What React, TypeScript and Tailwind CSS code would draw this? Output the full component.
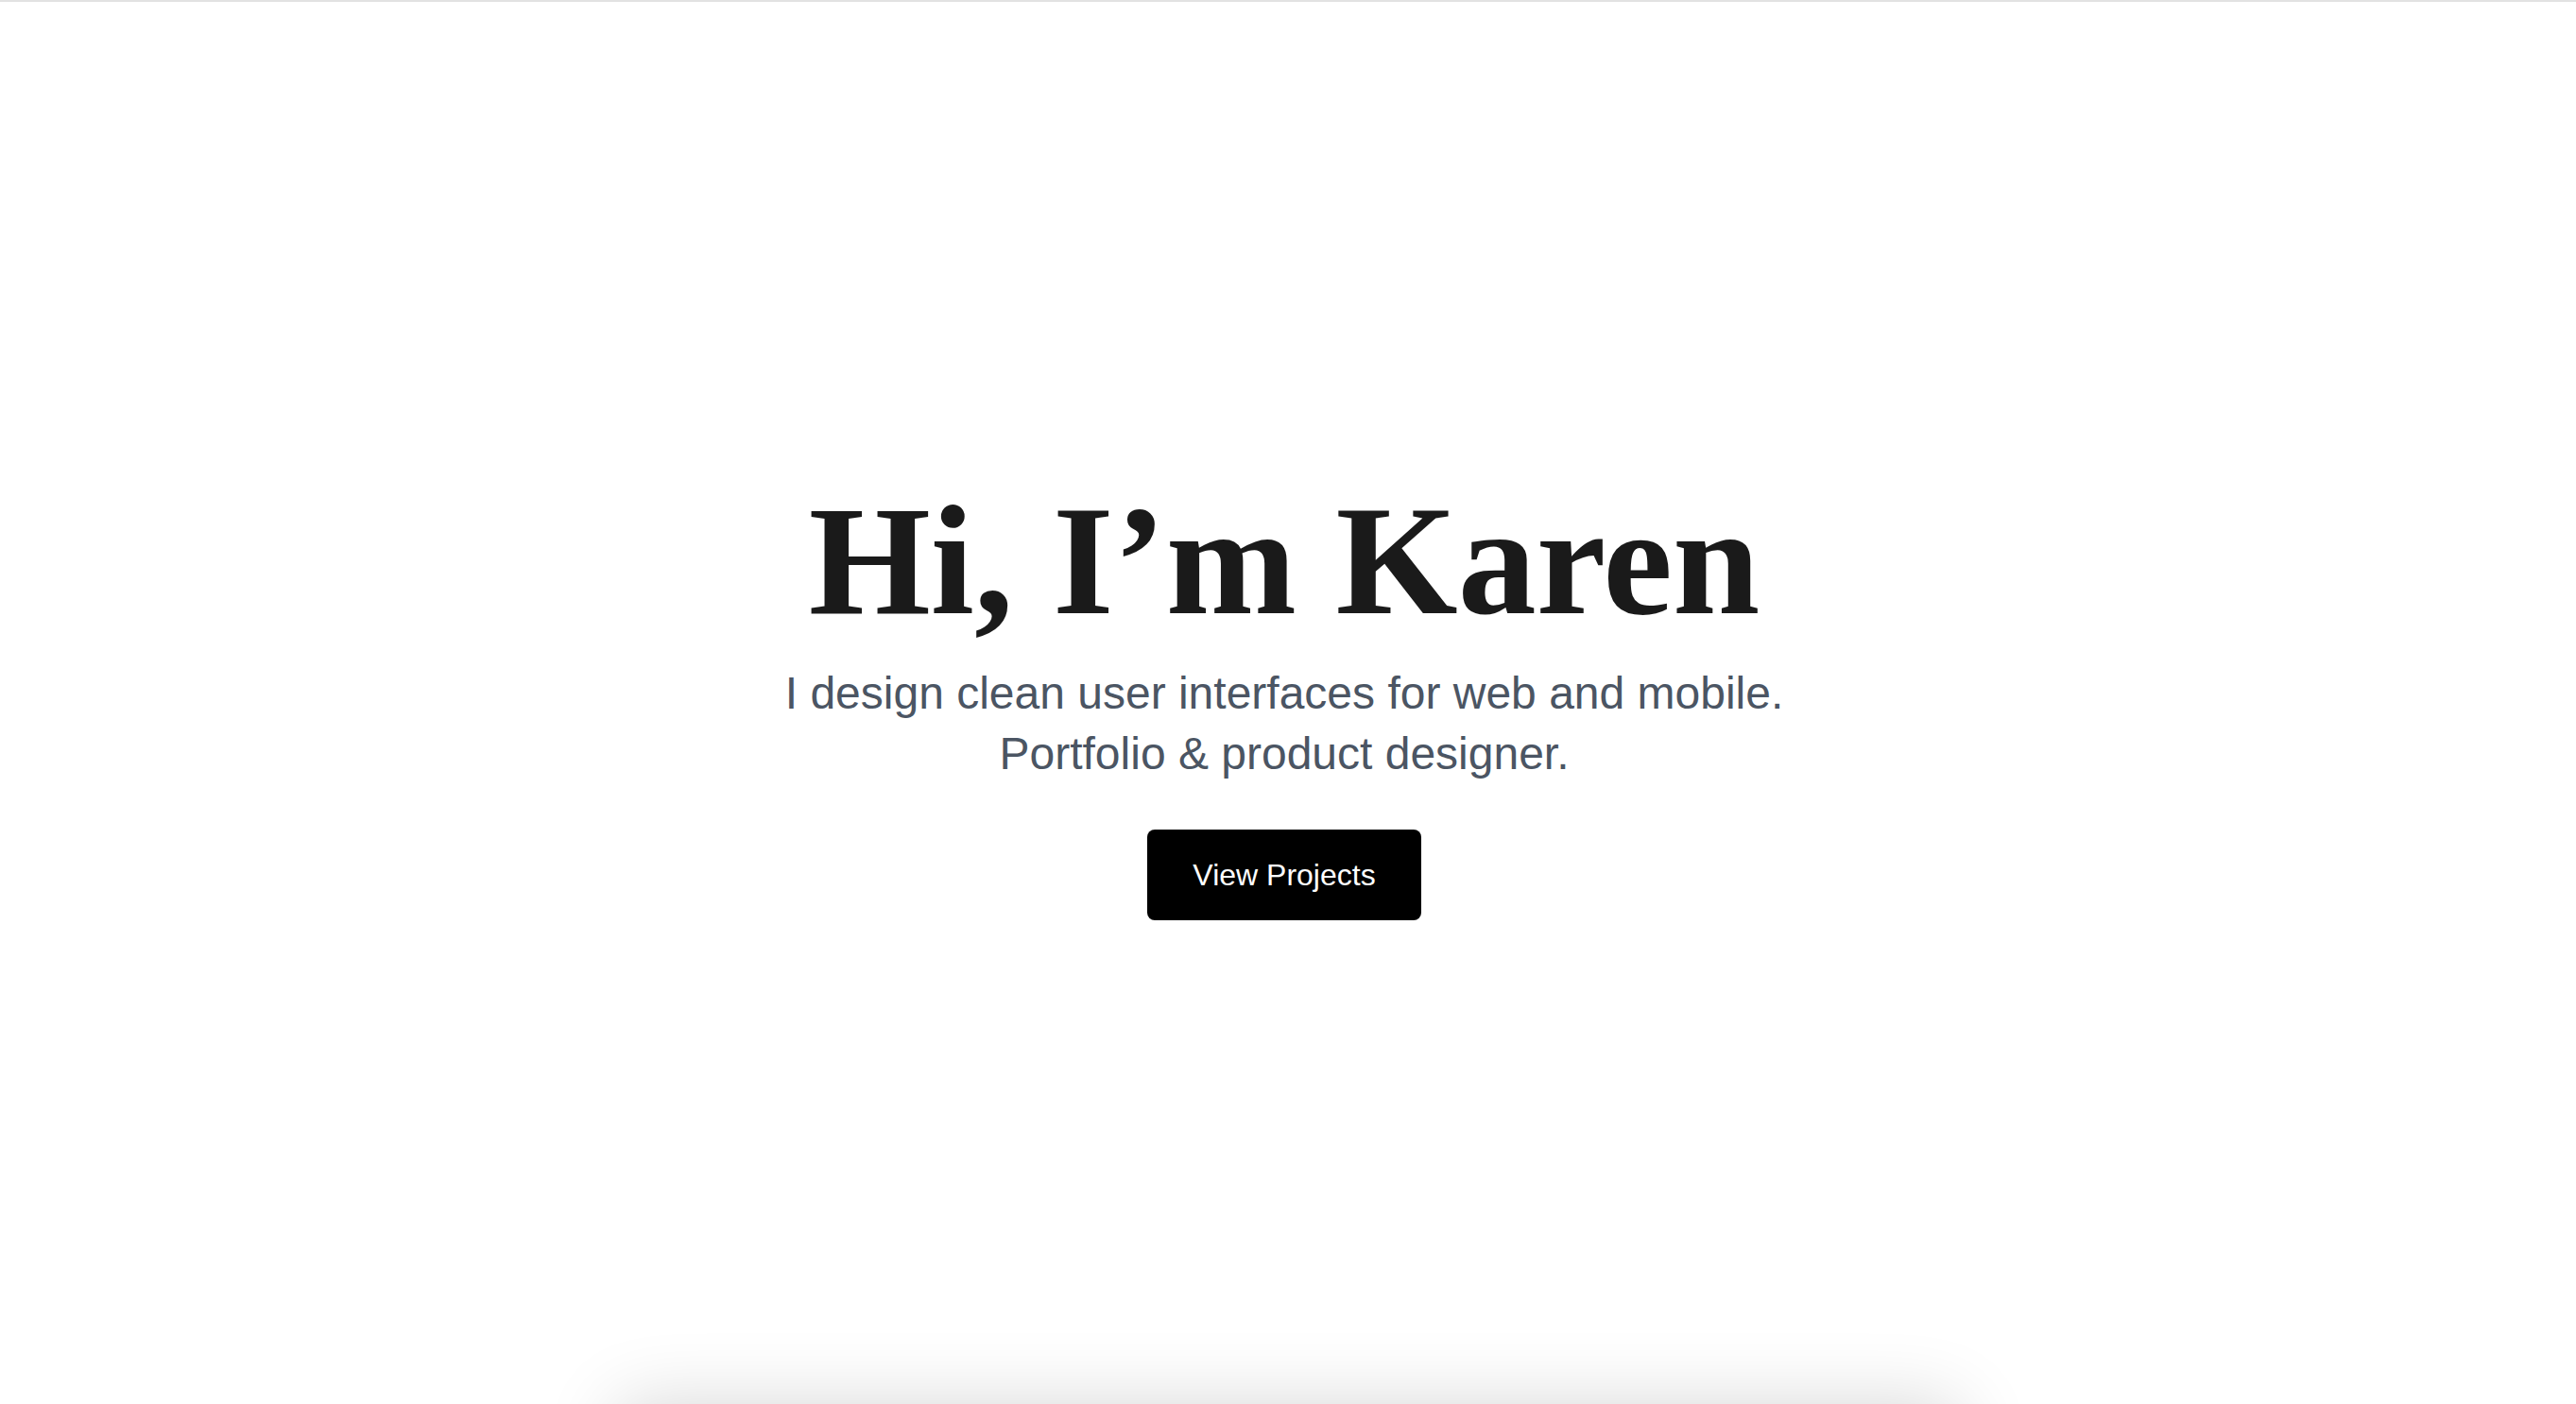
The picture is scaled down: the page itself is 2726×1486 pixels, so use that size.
export default function App() {
  return (
    <div className="h-screen overflow-hidden bg-white border-t-2 border-[#e2e2e2] flex flex-col font-['Liberation_Sans',Arial,sans-serif]">
      <section className="h-full shrink-0 flex flex-col items-center justify-center text-center pr-[8px] pb-[4px]">
        <h1 className="font-['Liberation_Serif','Times_New_Roman',serif] text-[166px] leading-none font-bold text-[#1a1a1a] mb-[26px]">
          Hi, I’m Karen
        </h1>
        <p className="text-[48px] leading-[64px] text-[#4b5563]">
          I design clean user interfaces for web and mobile.
          <br />
          Portfolio &amp; product designer.
        </p>
        <a
          href="#projects"
          className="mt-[48px] inline-block bg-black text-white text-[32px] leading-[48px] px-[48px] py-[24px] rounded-[8px]"
        >
          View Projects
        </a>
      </section>
      <div
        id="projects"
        className="shrink-0 mx-auto w-[1420px] h-[600px] bg-white rounded-[16px] shadow-[0_0_80px_rgba(0,0,0,0.16)]"
      />
    </div>
  );
}
